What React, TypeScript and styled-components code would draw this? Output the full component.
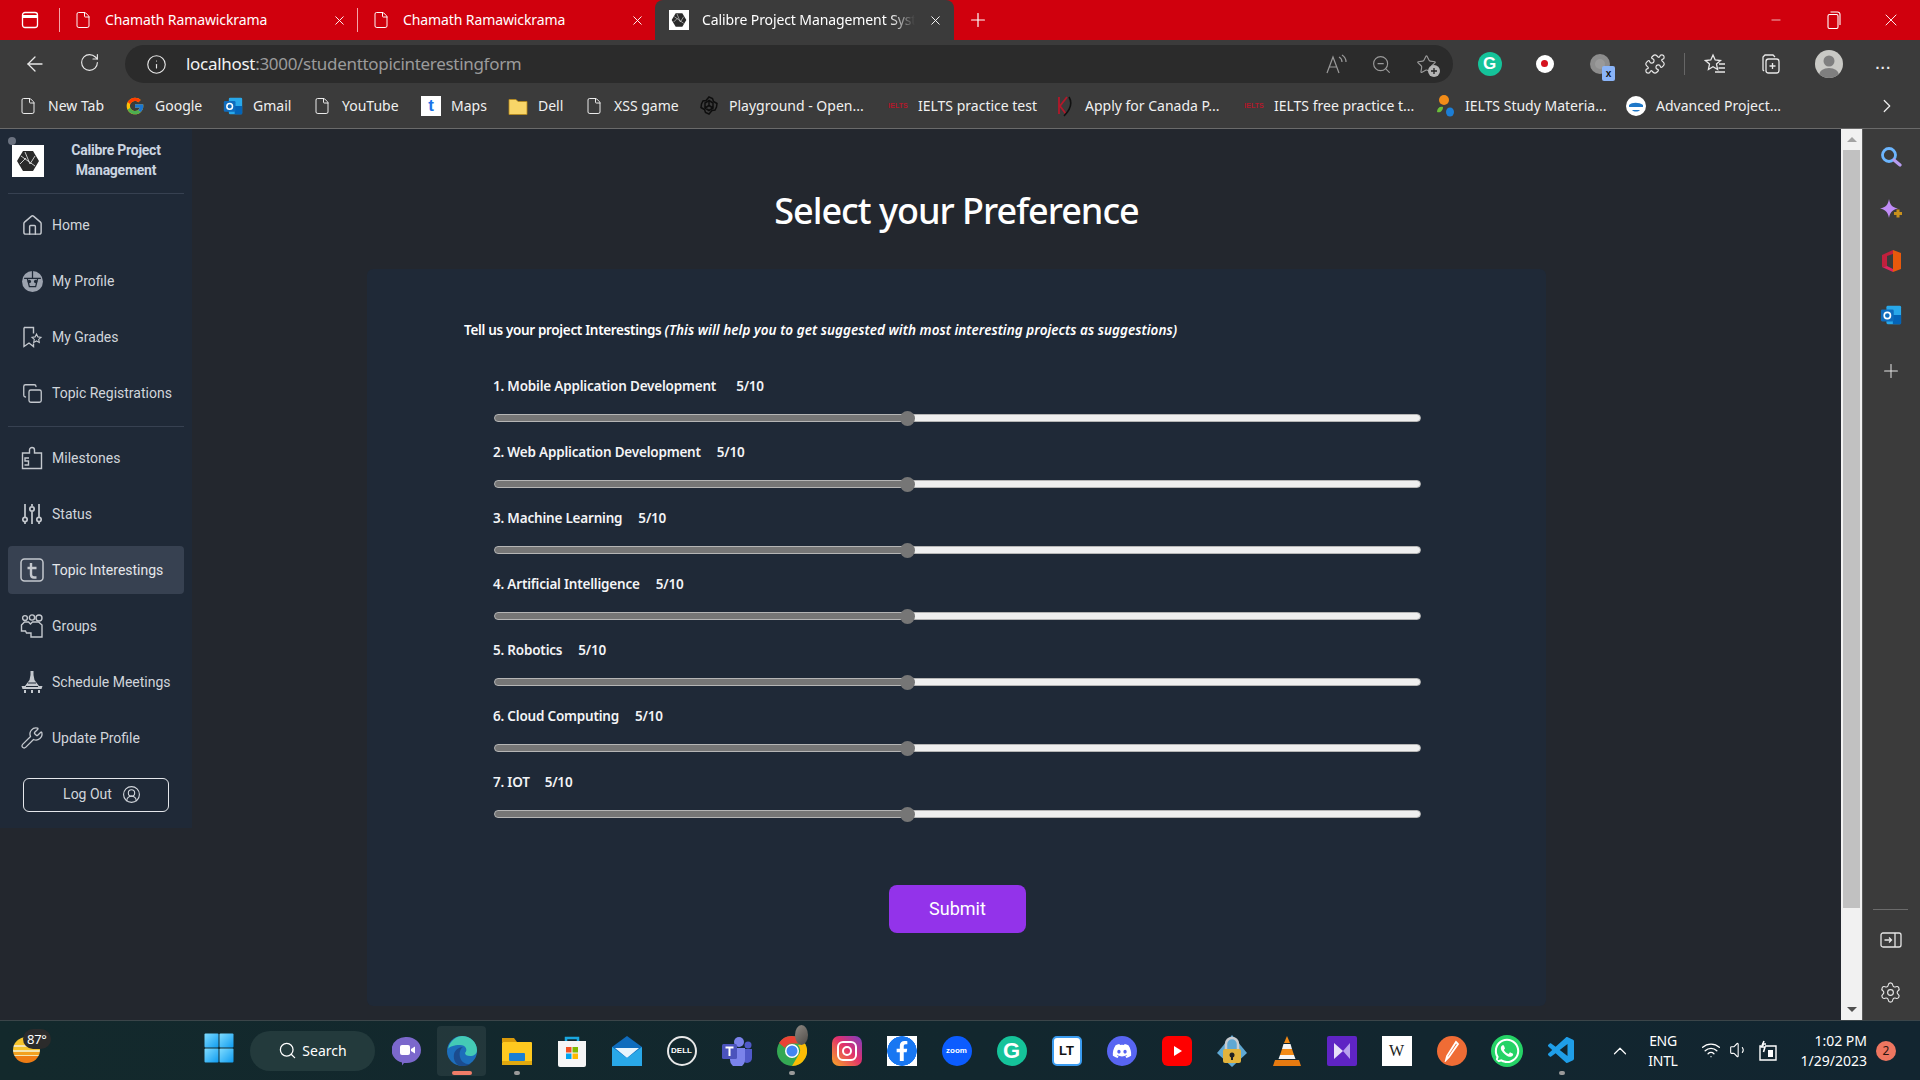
import React from 'react';
import styled, { createGlobalStyle } from 'styled-components';
import {
  ArrowLeft,
  ChevronRight,
  ChevronUp,
  CircleUserRound,
  Copy,
  File,
  House,
  Info,
  Minus,
  Plus,
  Puzzle,
  RotateCw,
  Search,
  Settings,
  Star,
  Volume1,
  Wifi,
  Wrench,
  X,
  ZoomOut,
} from 'lucide-react';
import { FcGoogle } from 'react-icons/fc';
import { FaDiscord, FaFacebookF, FaWhatsapp } from 'react-icons/fa';
import { VscVscode } from 'react-icons/vsc';

const RED = '#d0000d';
const CHROME = '#3b3b3b';
const PAGE = '#23272e';
const PANEL = '#1f2937';
const UI_FONT = '"Noto Sans", "Open Sans", sans-serif';

const GlobalStyle = createGlobalStyle`
  html, body { margin: 0; padding: 0; background: ${PAGE}; }
  * { box-sizing: border-box; }
  #root { width: 1920px; height: 1080px; overflow: hidden; }
`;

const Screen = styled.div`
  width: 1920px;
  height: 1080px;
  display: flex;
  flex-direction: column;
  font-family: ${UI_FONT};
  overflow: hidden;
`;

/* ---------- tab strip ---------- */
const TabStrip = styled.div`
  height: 40px;
  background: ${RED};
  display: flex;
  align-items: stretch;
  color: #fff;
`;
const TabsButton = styled.div`
  width: 59px;
  display: flex;
  align-items: center;
  justify-content: center;
  padding-left: 1px;
`;
const Tab = styled.div<{ $active?: boolean }>`
  width: ${(p) => (p.$active ? '299px' : '298px')};
  display: flex;
  align-items: center;
  gap: 13px;
  padding: ${(p) => (p.$active ? '0 11px 0 14px' : '0 10px 0 15px')};
  background: ${(p) => (p.$active ? CHROME : 'transparent')};
  border-radius: ${(p) => (p.$active ? '8px 8px 0 0' : '0')};
  position: relative;
  &::before {
    content: '';
    display: ${(p) => (p.$active ? 'none' : 'block')};
    position: absolute;
    left: 0;
    top: 8px;
    bottom: 8px;
    width: 1px;
    background: #f5a5a8;
  }
`;
const TabTitle = styled.span<{ $fade?: boolean }>`
  flex: 1;
  font-size: 14px;
  line-height: 20px;
  letter-spacing: -0.1px;
  white-space: nowrap;
  overflow: hidden;
  ${(p) => p.$fade && 'mask-image: linear-gradient(to right, #000 88%, transparent 100%);'}
`;
const NewTab = styled.div`
  width: 48px;
  display: flex;
  align-items: center;
  justify-content: center;
`;
const WindowControls = styled.div`
  margin-left: auto;
  display: flex;
  align-items: center;
`;
const WindowButton = styled.div`
  width: 57.5px;
  display: flex;
  justify-content: center;
`;

/* ---------- address bar ---------- */
const Toolbar = styled.div`
  height: 45px;
  background: ${CHROME};
  display: flex;
  align-items: center;
  color: #e8e8e8;
`;
const NavButton = styled.div`
  width: 55px;
  display: flex;
  justify-content: center;
`;
const NavGroup = styled.div`
  display: flex;
  width: 125px;
  padding-left: 7px;
  margin-top: 2px;
`;
const AddressBar = styled.div`
  width: 1328px;
  height: 38px;
  margin-top: 3px;
  background: #2b2b2b;
  border-radius: 19px;
  display: flex;
  align-items: center;
  padding: 0 16px 0 21px;
`;
const Url = styled.div`
  margin-left: 19px;
  margin-top: -2px;
  font-size: 17px;
  letter-spacing: -0.3px;
  color: #9b9b9b;
  flex: 1;
  b {
    font-weight: 400;
    color: #f2f2f2;
  }
`;
const AddressIcons = styled.div`
  display: flex;
  align-items: center;
  gap: 24px;
  color: #9a9a9a;
`;
const ExtensionRow = styled.div`
  display: flex;
  align-items: center;
  margin-left: 9px;
  margin-top: 2px;
`;
const ExtensionCell = styled.div`
  width: 55px;
  height: 36px;
  display: flex;
  align-items: center;
  justify-content: center;
  position: relative;
`;
const ToolbarDivider = styled.div`
  width: 1px;
  height: 22px;
  background: #666;
  margin: 0 2px;
`;
const GrammarlyBadge = styled.div<{ $size: number }>`
  width: ${(p) => p.$size}px;
  height: ${(p) => p.$size}px;
  border-radius: 50%;
  background: #15c39a;
  color: #fff;
  font: 700 ${(p) => Math.round(p.$size * 0.72)}px/1 'Liberation Sans', sans-serif;
  display: flex;
  align-items: center;
  justify-content: center;
`;
const RecordDot = styled.div`
  width: 18px;
  height: 18px;
  border-radius: 50%;
  background: #fff;
  display: flex;
  align-items: center;
  justify-content: center;
  &::after {
    content: '';
    width: 7px;
    height: 7px;
    border-radius: 50%;
    background: #d5121e;
  }
`;
const PowerBadge = styled.div`
  width: 20px;
  height: 20px;
  border-radius: 50%;
  background: #9a9a9a;
  border: 5px solid #8d8d8d;
`;
const XBadge = styled.span`
  position: absolute;
  left: 30px;
  top: 20px;
  width: 13px;
  height: 15px;
  background: #8ab4f8;
  border-radius: 2px;
  color: #111;
  font: 700 10px/15px 'Liberation Sans', sans-serif;
  text-align: center;
`;
const Avatar = styled.div`
  width: 28px;
  height: 28px;
  border-radius: 50%;
  background: #c9c9c5;
  overflow: hidden;
  margin-left: 8px;
`;
const MoreDots = styled.div`
  font: 700 14px/10px 'Liberation Sans', sans-serif;
  letter-spacing: 1.5px;
  color: #eee;
  margin-left: 8px;
`;

/* ---------- bookmarks ---------- */
const BookmarkBar = styled.div`
  height: 44px;
  background: ${CHROME};
  border-bottom: 1px solid #6a6a6a;
  display: flex;
  align-items: center;
  padding: 0 22px 2px 18px;
  color: #f0f0f0;
`;
const Bookmark = styled.div<{ $w: number }>`
  width: ${(p) => p.$w}px;
  display: flex;
  align-items: center;
  gap: 10px;
  font-size: 14px;
  letter-spacing: 0;
  white-space: nowrap;
`;
const FavIcon = styled.span`
  width: 20px;
  height: 20px;
  flex: none;
  display: flex;
  align-items: center;
  justify-content: center;
`;
const TabFavIcon = styled(FavIcon)`
  background: #fff;
`;
const IeltsMark = styled.span`
  color: #b3182a;
  font: 700 7px/1 'Liberation Sans', sans-serif;
`;
const MapsMark = styled.span`
  width: 20px;
  height: 20px;
  background: #fff;
  color: #1a73e8;
  font: 700 17px/20px 'Liberation Sans', sans-serif;
  text-align: center;
`;
const BookmarkMore = styled.div`
  margin-left: auto;
  display: flex;
`;

/* ---------- page ---------- */
const Body = styled.div`
  flex: 1;
  min-height: 0;
  display: flex;
`;
const Page = styled.div`
  flex: 1;
  min-width: 0;
  background: ${PAGE};
  display: flex;
  align-items: flex-start;
`;
const Sidebar = styled.aside`
  width: 192px;
  height: 699px;
  flex: none;
  background: ${PANEL};
  padding: 0 8px;
  display: flex;
  flex-direction: column;
  font-family: Roboto, sans-serif;
`;
const Brand = styled.div`
  height: 65px;
  border-bottom: 1px solid #374151;
  display: flex;
  align-items: center;
  padding: 6px 0 0 4px;
  position: relative;
  margin-bottom: 7px;
  &::before {
    content: '';
    position: absolute;
    left: 0;
    top: 8px;
    width: 8px;
    height: 8px;
    border-radius: 50%;
    background: #6b7280;
  }
`;
const BrandLogo = styled.div`
  width: 32px;
  height: 32px;
  background: #fff;
  display: flex;
  align-items: center;
  justify-content: center;
  margin-top: -6px;
`;
const BrandName = styled.div`
  flex: 1;
  margin-top: -8px;
  padding-left: 4px;
  text-align: center;
  font-size: 14px;
  line-height: 20px;
  font-weight: 700;
  letter-spacing: -0.25px;
  color: #cbd5e1;
`;
const NavList = styled.div`
  display: flex;
  flex-direction: column;
  gap: 8px;
`;
const NavDivider = styled.div`
  height: 1px;
  background: #374151;
  margin: 9px 0 7px;
`;
const NavItem = styled.div<{ $active?: boolean }>`
  height: 48px;
  display: flex;
  align-items: center;
  gap: 8px;
  padding-left: 12px;
  border-radius: 4px;
  font-size: 14px;
  color: ${(p) => (p.$active ? '#e5e7eb' : '#d1d5db')};
  background: ${(p) => (p.$active ? '#374151' : 'transparent')};
`;
const NavIcon = styled.span`
  width: 24px;
  height: 24px;
  flex: none;
  display: flex;
  align-items: center;
  justify-content: center;
  color: #c4c8ce;
`;
const LogoutButton = styled.div`
  margin: 16px 0 0 15px;
  width: 146px;
  height: 34px;
  border: 1px solid #e5e7eb;
  border-radius: 6px;
  display: flex;
  align-items: center;
  justify-content: center;
  gap: 10px;
  font-size: 14px;
  color: #d1d5db;
  padding: 0 0 2px 12px;
`;

const FormColumn = styled.main`
  width: 1179px;
  margin-left: 175px;
`;
const Title = styled.h1`
  margin: 0;
  padding-top: 60px;
  height: 140px;
  font-size: 36px;
  line-height: 44px;
  font-weight: 500;
  letter-spacing: -1px;
  text-align: center;
  color: #fff;
`;
const Card = styled.form`
  background: ${PANEL};
  border-radius: 6px;
  padding: 51px 97px 73px;
  height: 737px;
  display: flex;
  flex-direction: column;
`;
const Intro = styled.p`
  margin: 0 0 36px;
  font-size: 13.5px;
  line-height: 20px;
  font-weight: 600;
  letter-spacing: -0.33px;
  color: #fff;
  em {
    font-style: italic;
    letter-spacing: 0.04px;
  }
`;
const Rows = styled.div`
  padding-left: 30px;
  display: flex;
  flex-direction: column;
  gap: 16px;
`;
const Row = styled.div`
  display: flex;
  flex-direction: column;
  gap: 14px;
`;
const RowLabel = styled.label<{ $gap: number }>`
  display: flex;
  gap: ${(p) => p.$gap}px;
  margin-left: -1px;
  font-size: 13.5px;
  line-height: 20px;
  font-weight: 600;
  letter-spacing: -0.2px;
  color: #f3f4f6;
`;
const Range = styled.input`
  appearance: none;
  display: block;
  width: 927px;
  height: 16px;
  margin: 0;
  background: transparent;
  &::-webkit-slider-runnable-track {
    height: 8px;
    border-radius: 4px;
    border: 1px solid #b5b5b5;
    background: linear-gradient(to right, #767676 0 45%, #efefef 45% 100%);
  }
  &::-webkit-slider-thumb {
    appearance: none;
    width: 15px;
    height: 15px;
    margin-top: -4.5px;
    border-radius: 50%;
    background: #767676;
  }
`;
const Submit = styled.button`
  align-self: center;
  margin-top: 63px;
  margin-left: 2px;
  width: 137px;
  height: 48px;
  border: 0;
  border-radius: 8px;
  background: #9333ea;
  color: #fff;
  font: 400 18px/24px Roboto, sans-serif;
`;

/* ---------- scrollbar + edge panel ---------- */
const ScrollBar = styled.div`
  width: 21px;
  background: #f1f1f1;
  display: flex;
  flex-direction: column;
  align-items: center;
`;
const ScrollArrow = styled.div<{ $down?: boolean }>`
  flex: none;
  height: 21px;
  display: flex;
  align-items: center;
  &::after {
    content: '';
    border-left: 5px solid transparent;
    border-right: 5px solid transparent;
    ${(p) => (p.$down ? 'border-top: 5px solid #505050;' : 'border-bottom: 5px solid #a3a3a3;')}
  }
`;
const ScrollThumb = styled.div`
  width: 17px;
  height: 758px;
  background: #c1c1c1;
`;
const ScrollSpacer = styled.div`
  flex: 1;
`;
const EdgePanel = styled.div`
  width: 58px;
  background: ${CHROME};
  border-left: 1px solid #5a5a5a;
  padding: 2px 2px 2px 0;
  display: flex;
  flex-direction: column;
  align-items: center;
  color: #e6e6e6;
`;
const EdgeCell = styled.div<{ $push?: number }>`
  width: 100%;
  height: 52px;
  margin-top: ${(p) => p.$push ?? 0}px;
  display: flex;
  align-items: center;
  justify-content: center;
`;
const EdgeSpacer = styled.div`
  flex: 1;
`;
const EdgeDivider = styled.div`
  width: 35px;
  height: 1px;
  background: #6b6b6b;
  margin-bottom: 4px;
`;
const FavoriteAddWrap = styled.span`
  position: relative;
  display: flex;
`;
const FavoriteAddBadge = styled.svg`
  position: absolute;
  right: -3px;
  bottom: -2px;
`;

/* ---------- taskbar ---------- */
const Taskbar = styled.footer`
  height: 60px;
  border-top: 1px solid #3b4549;
  background: linear-gradient(to right, #13292c, #12272e 50%, #122530);
  display: flex;
  align-items: center;
  padding-right: 24px;
  color: #fff;
`;
const Weather = styled.div`
  width: 204px;
  height: 100%;
  position: relative;
`;
const Sun = styled.div`
  position: absolute;
  left: 13px;
  top: 16px;
  width: 27px;
  height: 26px;
  border-radius: 50%;
  background: linear-gradient(
    #f6c42c 0 30%,
    #f3e3b0 30% 37%,
    #f6c42c 37% 50%,
    #f3e3b0 50% 57%,
    #f2a020 57% 68%,
    #f3e3b0 68% 74%,
    #ee7c14 74%
  );
`;
const Temp = styled.span`
  position: absolute;
  left: 23px;
  top: 8px;
  height: 20px;
  padding: 0 4px;
  border-radius: 10px;
  background: #2b2b2b;
  font-size: 13px;
  line-height: 20px;
  letter-spacing: -0.3px;
`;
const StartButton = styled.div`
  width: 46px;
  flex: none;
`;
const SearchPill = styled.div`
  width: 125px;
  height: 40px;
  flex: none;
  border-radius: 20px;
  background: #233a3c;
  display: flex;
  align-items: center;
  justify-content: center;
  gap: 5px;
  font-size: 14px;
  margin-right: 4px;
`;
const TaskCell = styled.div<{ $active?: boolean }>`
  width: 55px;
  height: 50px;
  flex: none;
  display: flex;
  align-items: center;
  justify-content: center;
  position: relative;
  &::before {
    content: '';
    display: ${(p) => (p.$active ? 'block' : 'none')};
    position: absolute;
    inset: 0 3px;
    border-radius: 4px;
    background: rgba(255, 255, 255, 0.07);
  }
`;
const TaskDot = styled.span<{ $running?: boolean }>`
  position: absolute;
  left: 50%;
  bottom: 1px;
  height: 4px;
  width: ${(p) => (p.$running ? '20px' : '6px')};
  transform: translateX(-50%);
  border-radius: 2px;
  background: ${(p) => (p.$running ? '#f07d68' : '#9a9a9a')};
`;
const IconTile = styled.div<{ $bg: string; $radius?: string; $color?: string; $ring?: string }>`
  position: relative;
  width: 30px;
  height: 30px;
  display: flex;
  align-items: center;
  justify-content: center;
  background: ${(p) => p.$bg};
  border-radius: ${(p) => p.$radius ?? '50%'};
  color: ${(p) => p.$color ?? '#fff'};
  border: ${(p) => (p.$ring ? `2px solid ${p.$ring}` : '0')};
  font-family: 'Liberation Sans', sans-serif;
`;
const TileText = styled.span<{ $size: number; $serif?: boolean }>`
  font-size: ${(p) => p.$size}px;
  font-weight: 700;
  line-height: 1;
  ${(p) => p.$serif && "font-family: 'Liberation Serif', serif; font-weight: 400;"}
`;
const WhatsappIcon = styled(FaWhatsapp)`
  background: #25d366;
  border-radius: 50%;
  padding: 2px;
`;
const ChromeBadge = styled.span`
  position: absolute;
  left: 31px;
  top: -1px;
  width: 13px;
  height: 20px;
  border-radius: 50%;
  background: linear-gradient(135deg, #8f8a84, #4e4a46);
`;
const TrayChevron = styled.div`
  margin-left: 20px;
  display: flex;
`;
const Lang = styled.div`
  margin-left: 12px;
  width: 40px;
  text-align: center;
  font-size: 14px;
  line-height: 20px;
  letter-spacing: -0.3px;
`;
const TrayIcons = styled.div`
  margin-left: 18px;
  display: flex;
  gap: 8px;
`;
const Clock = styled.div`
  margin-left: auto;
  text-align: right;
  font-size: 14px;
  line-height: 20px;
`;
const CountBadge = styled.div`
  margin-left: 9px;
  width: 20px;
  height: 20px;
  border-radius: 50%;
  background: #ee7660;
  color: #2a1510;
  font-size: 12px;
  line-height: 20px;
  text-align: center;
`;

/* ---------- hand drawn icons ---------- */
function HexLogo({ size }: { size: number }) {
  return (
    <svg width={size} height={size} viewBox="0 0 24 24">
      <path d="M7 2h10l6 10-6 10H7L1 12z" fill="#2a2a2a" />
      <path d="M5 7l14 10M9 3l5 12 5-8M4 15l6-6" stroke="#ddd" strokeWidth="0.9" fill="none" />
    </svg>
  );
}
function TabsIcon() {
  return (
    <svg width="18" height="18" viewBox="0 0 18 18" fill="none" stroke="#fff" strokeWidth="1.3">
      <rect x="1.5" y="1.5" width="15" height="15" rx="2.5" />
      <path d="M2 5.5h14" strokeWidth="3" />
    </svg>
  );
}
function ProfileIcon() {
  return (
    <svg width="23" height="23" viewBox="0 0 22 22">
      <circle cx="11" cy="11" r="10" fill="#9ca3af" />
      <path d="M3 8h16M11 1v7M6 8l2 8h6l2-8" stroke="#1f2937" strokeWidth="1.2" fill="none" />
      <circle cx="8" cy="11" r="1.6" fill="#1f2937" />
      <circle cx="14" cy="11" r="1.6" fill="#1f2937" />
    </svg>
  );
}
function GradesIcon() {
  return (
    <svg width="22" height="22" viewBox="0 0 22 22" fill="none" stroke="currentColor" strokeWidth="1.4">
      <path d="M3 1.5h9.5v6M3 1.5v19l5-3.5 4.5 3.5v-3" />
      <path d="M15.5 8l1.4 2.9 3.1.4-2.3 2.1.6 3.1-2.8-1.6-2.8 1.6.6-3.1-2.3-2.1 3.1-.4z" strokeWidth="1.1" />
    </svg>
  );
}
function MilestonesIcon() {
  return (
    <svg width="22" height="24" viewBox="0 0 22 24" fill="none" stroke="currentColor" strokeWidth="1.4">
      <path d="M1.5 7h7V4a2.5 2.5 0 0 1 5 0v3h7v15.5h-19z" />
      <path d="M8 12H4v3h3.5v4H3.5" />
    </svg>
  );
}
function StatusIcon() {
  return (
    <svg width="20" height="22" viewBox="0 0 20 22" fill="none" stroke="currentColor" strokeWidth="1.7">
      <path d="M3 1v13M3 19v2M10 1v2M10 9v12M17 1v13M17 19v2" />
      <circle cx="3" cy="16.5" r="2.2" />
      <circle cx="10" cy="6" r="2.2" />
      <circle cx="17" cy="16.5" r="2.2" />
    </svg>
  );
}
function TopicIcon() {
  return (
    <svg width="24" height="24" viewBox="0 0 24 24" fill="none" stroke="currentColor" strokeWidth="1.5">
      <rect x="1" y="1" width="22" height="22" rx="3.5" />
      <path d="M11 5v11.5c0 2 1.2 3 3 3h2.5M7.5 10h9" strokeWidth="2.4" />
    </svg>
  );
}
function GroupsIcon() {
  return (
    <svg width="24" height="24" viewBox="0 0 24 24" fill="none" stroke="currentColor" strokeWidth="1.4">
      <circle cx="5" cy="4" r="2.4" />
      <circle cx="12" cy="3.5" r="2.6" />
      <circle cx="19" cy="4" r="3" />
      <path d="M1.5 17V11l3-3h4l2 2 2-2h6l3.5 3v12H11v-4H6.5l-1-2z" />
    </svg>
  );
}
function ScheduleIcon() {
  return (
    <svg width="24" height="24" viewBox="0 0 24 24" fill="currentColor">
      <path d="M10.5 1h3v4l1 5 4.5 6h3.5l-1 3H2.5l-1-3H5l4.5-6 1-5z" />
      <path d="M4 20h2v3H4zM11 20h2v3h-2zM18 20h2v3h-2z" />
      <path d="M8 13h8M6 16.5h12" stroke="#1f2937" strokeWidth="1" />
    </svg>
  );
}
function OutlookIcon({ size }: { size: number }) {
  return (
    <svg width={size} height={size} viewBox="0 0 24 24">
      <rect x="7" y="2" width="16" height="20" rx="1.5" fill="#28a8ea" />
      <rect x="14" y="12" width="9" height="10" fill="#0364b8" />
      <rect x="1" y="6" width="14" height="13" rx="1.5" fill="#0f6cbd" />
      <circle cx="8" cy="12.5" r="3.4" fill="none" stroke="#fff" strokeWidth="1.8" />
    </svg>
  );
}
function OpenAiIcon() {
  return (
    <svg width="23" height="23" viewBox="0 0 20 20" fill="none" stroke="#0e0e0e" strokeWidth="1.5">
      <path d="M10 1.5l3.5 1.5 1 3 3.5 2-.5 3.5-1.5 3-3 .5L10 18.500 6.500 17l-1-3-3.500-2 .5-3.500L4 5.500l3-.5z" />
      <path d="M10 5l4 2.500v5L10 15l-4-2.500v-5zM10 5v5l4 2.500M10 10l-4 2.500" />
    </svg>
  );
}
function KayIcon() {
  return (
    <svg width="20" height="22" viewBox="0 0 20 22" fill="none">
      <path d="M4 2v17M12 2L5 11l6 8" stroke="#b3182a" strokeWidth="1.8" />
      <path d="M14 2c3 5 2 12-5 19" stroke="#111" strokeWidth="1.6" />
    </svg>
  );
}
function StudyIcon() {
  return (
    <svg width="20" height="22" viewBox="0 0 20 22">
      <ellipse cx="9" cy="5" rx="5" ry="5" fill="#f28c18" />
      <path d="M2 17c0-4 3-6 6-5 0 4-3 6-6 5z" fill="#6bbf3a" />
      <ellipse cx="15" cy="17" rx="4" ry="4.5" fill="#1c7ed6" />
    </svg>
  );
}
function AdvancedIcon() {
  return (
    <svg width="20" height="20" viewBox="0 0 20 20">
      <circle cx="10" cy="10" r="10" fill="#fff" />
      <path d="M3 9c3-3 10-3 14 0v2H3z" fill="#1f78c8" />
      <path d="M6 14c2 2 6 2 8 0z" fill="#1f78c8" />
    </svg>
  );
}
function FolderFav() {
  return (
    <svg width="20" height="18" viewBox="0 0 20 18">
      <path d="M1 2.5h7l2 2h9v13H1z" fill="#f8d568" stroke="#b98a1a" strokeWidth="0.8" />
    </svg>
  );
}
function ReadAloudIcon() {
  return (
    <svg width="22" height="22" viewBox="0 0 22 22" fill="none" stroke="currentColor" strokeWidth="1.2">
      <path d="M2 20L8 4l6 16M4.5 14h7M14 4c2 1 3 3 3 5M17 2c2.5 1.5 4 4 4 7" />
    </svg>
  );
}
function FavoriteAddIcon() {
  return (
    <FavoriteAddWrap>
      <Star size={21} strokeWidth={1.3} />
      <FavoriteAddBadge width="12" height="12" viewBox="0 0 12 12">
        <circle cx="6" cy="6" r="6" fill="#b5b5b5" />
        <path d="M6 3v6M3 6h6" stroke="#222" strokeWidth="1.3" />
      </FavoriteAddBadge>
    </FavoriteAddWrap>
  );
}
function FavoritesIcon() {
  return (
    <svg width="22" height="22" viewBox="0 0 22 22" fill="none" stroke="currentColor" strokeWidth="1.3">
      <path d="M9 2l2.2 5 5.3.6-4 3.5 1.1 5.4L9 13.8 4.4 16.5l1.1-5.4-4-3.5L6.8 7zM15 11h6M14.5 15h6.500M11 19h10" />
    </svg>
  );
}
function CollectionsIcon() {
  return (
    <svg width="22" height="22" viewBox="0 0 22 22" fill="none" stroke="currentColor" strokeWidth="1.3">
      <path d="M5 18l-1-1V4l2-2h8l2 2" />
      <rect x="7" y="6" width="13" height="14" rx="2.5" />
      <path d="M13.5 10v6M10.5 13h6" />
    </svg>
  );
}
function AvatarShape() {
  return (
    <svg width="28" height="28" viewBox="0 0 28 28">
      <circle cx="14" cy="11" r="5.5" fill="#7f7f7f" />
      <ellipse cx="14" cy="25" rx="10" ry="7" fill="#7f7f7f" />
    </svg>
  );
}
function RestoreIcon() {
  return (
    <svg width="14" height="18" viewBox="0 0 14 18" fill="none" stroke="#fff" strokeWidth="1.1">
      <rect x="1" y="3.5" width="10" height="14" rx="1.5" />
      <path d="M3.5 1h7a2.5 2.5 0 0 1 2.5 2.5V14" />
    </svg>
  );
}
function EdgeSearchIcon() {
  return (
    <svg width="22" height="22" viewBox="0 0 22 22" fill="none">
      <circle cx="9" cy="9" r="6.5" stroke="#6cb6ff" strokeWidth="2.8" />
      <path d="M14 14l6 5" stroke="#b79cf0" strokeWidth="3.2" strokeLinecap="round" />
    </svg>
  );
}
function SparkIcon() {
  return (
    <svg width="24" height="22" viewBox="0 0 24 22">
      <path d="M10 1c1 6 3 8 9 9.5-6 1.5-8 4-9 9.5-1-5.5-3-8-9-9.5C7 9 9 7 10 1z" fill="#c08cf6" />
      <path d="M17.5 11.5h3v2.5H23v3h-2.5v2.5h-3V17H15v-3h2.5z" fill="#c8901c" />
    </svg>
  );
}
function OfficeIcon() {
  return (
    <svg width="22" height="24" viewBox="0 0 22 24">
      <path d="M13 1l8 3v16l-8 3z" fill="#e8590c" />
      <path d="M13 1L2 6v12l5 -1V7l6-2z" fill="#c2203d" />
      <path d="M2 18l11 5v-3l-6-3z" fill="#e0245e" />
    </svg>
  );
}
function SidebarToggleIcon() {
  return (
    <svg width="22" height="18" viewBox="0 0 22 18" fill="none" stroke="currentColor" strokeWidth="1.3">
      <rect x="1" y="2" width="20" height="14" rx="2" />
      <path d="M15 2v14M4.5 9h7M9 6.5L11.5 9 9 11.5" />
    </svg>
  );
}
function StartIcon() {
  return (
    <svg width="30" height="30" viewBox="0 0 30 30">
      <defs>
        <linearGradient id="win" x1="0" y1="0" x2="1" y2="1">
          <stop offset="0" stopColor="#7fdcff" />
          <stop offset="1" stopColor="#0f9cf0" />
        </linearGradient>
      </defs>
      <rect x="0.5" y="0.5" width="14" height="14" rx="1" fill="url(#win)" />
      <rect x="15.5" y="0.5" width="14" height="14" rx="1" fill="url(#win)" />
      <rect x="0.5" y="15.5" width="14" height="14" rx="1" fill="url(#win)" />
      <rect x="15.5" y="15.5" width="14" height="14" rx="1" fill="url(#win)" />
    </svg>
  );
}
function MeetIcon() {
  return (
    <svg width="30" height="30" viewBox="0 0 30 30">
      <path d="M15 1a14 13 0 0 1 0 26h-3l-2 2.5V26.5A14 13 0 0 1 15 1z" fill="#7b68cc" />
      <rect x="8" y="9" width="10" height="10" rx="2" fill="#fff" />
      <path d="M19 13l4-2.5v7L19 15z" fill="#fff" />
    </svg>
  );
}
function EdgeIcon() {
  return (
    <svg width="32" height="32" viewBox="0 0 32 32">
      <circle cx="16" cy="16" r="15" fill="#0c63b6" />
      <path d="M2 14C4 5 11 1 16 1c8 0 15 6 15 14 0 4-3 6-7 6-3 0-5-1-5-3 3-3 1-8-5-8-6 0-11 2-12 4z" fill="#36c6b0" />
      <path d="M16 31c-6 0-9-6-8-12 1-4 5-7 9-7-3 2-4 6-3 10 1 5 6 8 11 7-2 1-5 2-9 2z" fill="#0a3f86" />
    </svg>
  );
}
function ExplorerIcon() {
  return (
    <svg width="30" height="28" viewBox="0 0 30 28">
      <path d="M0 1h12l3 4H0z" fill="#d99a0a" />
      <rect x="0" y="5" width="30" height="23" rx="1" fill="#ffc91f" />
      <rect x="7" y="16" width="16" height="8" rx="1" fill="#1a7fd4" />
      <rect x="0" y="24" width="30" height="4" fill="#e0a80e" />
    </svg>
  );
}
function StoreIcon() {
  return (
    <svg width="30" height="32" viewBox="0 0 30 32">
      <path d="M9 6V3h12v3" stroke="#19a7e0" strokeWidth="2.5" fill="none" />
      <path d="M1 6h28v24a2 2 0 0 1-2 2H3a2 2 0 0 1-2-2z" fill="#f5f5f5" />
      <rect x="9" y="12" width="5.5" height="5.5" fill="#f25022" />
      <rect x="15.5" y="12" width="5.5" height="5.5" fill="#7fba00" />
      <rect x="9" y="18.5" width="5.5" height="5.5" fill="#00a4ef" />
      <rect x="15.5" y="18.5" width="5.5" height="5.5" fill="#ffb900" />
    </svg>
  );
}
function MailIcon() {
  return (
    <svg width="30" height="30" viewBox="0 0 30 30">
      <path d="M0 11L15 0l15 11v19H0z" fill="#0f6cbd" />
      <path d="M3 12h24L15 22z" fill="#e8f4fc" />
      <path d="M0 11l15 11 15-11v19H0z" fill="#29a8e8" />
    </svg>
  );
}
function TeamsIcon() {
  return (
    <svg width="30" height="30" viewBox="0 0 30 30">
      <circle cx="17" cy="6" r="5" fill="#7b83eb" />
      <circle cx="26" cy="9" r="3.5" fill="#5059c9" />
      <path d="M20 13h10v9a5 5 0 0 1-10 0z" fill="#5059c9" />
      <path d="M8 12h15v12a6 6 0 0 1-15 0z" fill="#7b83eb" />
      <rect x="0" y="8" width="15" height="15" rx="1.5" fill="#4b53bc" />
      <path d="M3.5 11.5h8M7.5 11.5V20" stroke="#fff" strokeWidth="2" />
    </svg>
  );
}
function ChromeIcon() {
  return (
    <svg width="30" height="30" viewBox="0 0 30 30">
      <circle cx="15" cy="15" r="15" fill="#34a853" />
      <path d="M15 0a15 15 0 0 1 13 7.5H15A7.5 7.5 0 0 0 8 12L2 7A15 15 0 0 1 15 0z" fill="#ea4335" />
      <path d="M28 7.5A15 15 0 0 1 15 30l6.5-11A7.5 7.5 0 0 0 21 9z" fill="#fbbc05" />
      <circle cx="15" cy="15" r="7" fill="#fff" />
      <circle cx="15" cy="15" r="5.5" fill="#4285f4" />
    </svg>
  );
}
function LockIcon() {
  return (
    <svg width="30" height="32" viewBox="0 0 30 32">
      <path d="M15 0l15 18-15 14L0 18z" fill="#5fa8d3" />
      <path d="M9 14V9a6 6 0 0 1 12 0v5" fill="none" stroke="#c8ccd0" strokeWidth="2.5" />
      <rect x="6" y="14" width="18" height="14" rx="2" fill="#e2b33c" />
      <circle cx="15" cy="20" r="2.5" fill="#222" />
      <path d="M14 20h2v5h-2z" fill="#222" />
    </svg>
  );
}
function VlcIcon() {
  return (
    <svg width="28" height="30" viewBox="0 0 28 30">
      <path d="M14 0l3 7H11z" fill="#f28a16" />
      <path d="M10.5 8h7l1.5 5H9z" fill="#f5f5f5" />
      <path d="M9 13h10l2 6H7z" fill="#f28a16" />
      <path d="M7 19h14l1.5 4h-17z" fill="#f5f5f5" />
      <path d="M2 24h24l2 6H0z" fill="#e67a10" />
    </svg>
  );
}
function VsPurpleIcon() {
  return (
    <svg width="18" height="20" viewBox="0 0 18 20">
      <path d="M1 2l9 8-9 8z" fill="#e8e0f8" />
      <path d="M17 2l-7 8 7 8z" fill="#b9a2ee" />
    </svg>
  );
}
function PostmanMark() {
  return (
    <svg width="18" height="22" viewBox="0 0 18 22" fill="none">
      <path d="M13 2l2 2L6 17l-3 3 1-4z" stroke="#fff" strokeWidth="1.8" />
    </svg>
  );
}
function BatteryIcon() {
  return (
    <svg width="22" height="22" viewBox="0 0 22 22" fill="none" stroke="#fff" strokeWidth="1.4">
      <path d="M8 6h11v14H3V6h1M9 4H6v2" />
      <path d="M7 1L4.5 7H8l-1.5 5" strokeWidth="1.6" />
      <rect x="11" y="10" width="5" height="7" fill="#fff" stroke="none" />
    </svg>
  );
}

const bookmarks: { label: string; w: number; icon: React.ReactNode }[] = [
  { label: 'New Tab', w: 107, icon: <File size={18} strokeWidth={1.3} /> },
  { label: 'Google', w: 98, icon: <FcGoogle size={20} /> },
  { label: 'Gmail', w: 89, icon: <OutlookIcon size={20} /> },
  { label: 'YouTube', w: 109, icon: <File size={18} strokeWidth={1.3} /> },
  { label: 'Maps', w: 87, icon: <MapsMark>t</MapsMark> },
  { label: 'Dell', w: 76, icon: <FolderFav /> },
  { label: 'XSS game', w: 115, icon: <File size={18} strokeWidth={1.3} /> },
  { label: 'Playground - Open...', w: 189, icon: <OpenAiIcon /> },
  { label: 'IELTS practice test', w: 167, icon: <IeltsMark>IELTS</IeltsMark> },
  { label: 'Apply for Canada P...', w: 189, icon: <KayIcon /> },
  { label: 'IELTS free practice t...', w: 191, icon: <IeltsMark>IELTS</IeltsMark> },
  { label: 'IELTS Study Materia...', w: 191, icon: <StudyIcon /> },
  { label: 'Advanced Project...', w: 180, icon: <AdvancedIcon /> },
];

const mainNav = [
  { label: 'Home', icon: <House size={23} strokeWidth={1.5} /> },
  { label: 'My Profile', icon: <ProfileIcon /> },
  { label: 'My Grades', icon: <GradesIcon /> },
  { label: 'Topic Registrations', icon: <Copy size={21} strokeWidth={1.5} /> },
];

const moreNav = [
  { label: 'Milestones', icon: <MilestonesIcon /> },
  { label: 'Status', icon: <StatusIcon /> },
  { label: 'Topic Interestings', icon: <TopicIcon />, active: true },
  { label: 'Groups', icon: <GroupsIcon /> },
  { label: 'Schedule Meetings', icon: <ScheduleIcon /> },
  { label: 'Update Profile', icon: <Wrench size={24} strokeWidth={1.3} /> },
];

const topics = [
  { label: '1. Mobile Application Development', gap: 20 },
  { label: '2. Web Application Development', gap: 16 },
  { label: '3. Machine Learning', gap: 16 },
  { label: '4. Artificial Intelligence', gap: 16 },
  { label: '5. Robotics', gap: 16 },
  { label: '6. Cloud Computing', gap: 16 },
  { label: '7. IOT', gap: 15 },
];

const taskApps: { key: string; icon: React.ReactNode; active?: boolean; dot?: boolean }[] = [
  { key: 'meet', icon: <MeetIcon /> },
  { key: 'edge', icon: <EdgeIcon />, active: true },
  { key: 'explorer', icon: <ExplorerIcon />, dot: true },
  { key: 'store', icon: <StoreIcon /> },
  { key: 'mail', icon: <MailIcon /> },
  {
    key: 'dell',
    icon: (
      <IconTile $bg="transparent" $ring="#e8e8e8">
        <TileText $size={8}>DELL</TileText>
      </IconTile>
    ),
  },
  { key: 'teams', icon: <TeamsIcon /> },
  {
    key: 'chrome',
    icon: (
      <>
        <ChromeIcon />
        <ChromeBadge />
      </>
    ),
    dot: true,
  },
  {
    key: 'instagram',
    icon: (
      <IconTile $bg="linear-gradient(45deg,#f9a825,#e1306c 55%,#7b3fc4)" $radius="7px">
        <svg width="22" height="22" viewBox="0 0 22 22" fill="none" stroke="#fff" strokeWidth="2">
          <rect x="2" y="2" width="18" height="18" rx="5" />
          <circle cx="11" cy="11" r="4" />
        </svg>
      </IconTile>
    ),
  },
  {
    key: 'facebook',
    icon: (
      <IconTile $bg="radial-gradient(circle, #1877f2 0 14.5px, #fff 15px)" $radius="0">
        <FaFacebookF size={20} />
      </IconTile>
    ),
  },
  {
    key: 'zoom',
    icon: (
      <IconTile $bg="#0b5cff">
        <TileText $size={8}>zoom</TileText>
      </IconTile>
    ),
  },
  {
    key: 'grammarly',
    icon: (
      <IconTile $bg="#15c39a">
        <TileText $size={22}>G</TileText>
      </IconTile>
    ),
  },
  {
    key: 'lt',
    icon: (
      <IconTile $bg="#fff" $radius="5px" $color="#111" $ring="#3b9cf0">
        <TileText $size={13}>LT</TileText>
      </IconTile>
    ),
  },
  {
    key: 'discord',
    icon: (
      <IconTile $bg="#5865f2">
        <FaDiscord size={20} />
      </IconTile>
    ),
  },
  {
    key: 'youtube',
    icon: (
      <IconTile $bg="#f00" $radius="6px">
        <svg width="12" height="12" viewBox="0 0 12 12">
          <path d="M3 1l8 5-8 5z" fill="#fff" />
        </svg>
      </IconTile>
    ),
  },
  { key: 'lock', icon: <LockIcon /> },
  { key: 'vlc', icon: <VlcIcon /> },
  {
    key: 'vs',
    icon: (
      <IconTile $bg="#5f24c4" $radius="2px">
        <VsPurpleIcon />
      </IconTile>
    ),
  },
  {
    key: 'wiki',
    icon: (
      <IconTile $bg="#fff" $radius="0" $color="#222">
        <TileText $size={16} $serif>
          W
        </TileText>
      </IconTile>
    ),
  },
  {
    key: 'postman',
    icon: (
      <IconTile $bg="#ef6c35">
        <PostmanMark />
      </IconTile>
    ),
  },
  { key: 'whatsapp', icon: <WhatsappIcon size={32} color="#fff" /> },
  { key: 'vscode', icon: <VscVscode size={32} color="#1f9ee8" />, dot: true },
];

export default function App() {
  return (
    <>
      <GlobalStyle />
      <Screen>
        <TabStrip>
          <TabsButton>
            <TabsIcon />
          </TabsButton>
          {[0, 1].map((n) => (
            <Tab key={n}>
              <File size={18} strokeWidth={1.3} />
              <TabTitle>Chamath Ramawickrama</TabTitle>
              <X size={15} strokeWidth={1.5} />
            </Tab>
          ))}
          <Tab $active>
            <TabFavIcon>
              <HexLogo size={16} />
            </TabFavIcon>
            <TabTitle $fade>Calibre Project Management System</TabTitle>
            <X size={15} strokeWidth={1.5} />
          </Tab>
          <NewTab>
            <Plus size={22} strokeWidth={1.3} />
          </NewTab>
          <WindowControls>
            <WindowButton>
              <Minus size={14} strokeWidth={1.2} />
            </WindowButton>
            <WindowButton>
              <RestoreIcon />
            </WindowButton>
            <WindowButton>
              <X size={20} strokeWidth={1.1} />
            </WindowButton>
          </WindowControls>
        </TabStrip>

        <Toolbar>
          <NavGroup>
            <NavButton>
              <ArrowLeft size={24} strokeWidth={1.3} />
            </NavButton>
            <NavButton>
              <RotateCw size={21} strokeWidth={1.3} />
            </NavButton>
          </NavGroup>
          <AddressBar>
            <Info size={21} strokeWidth={1.3} color="#e8e8e8" />
            <Url>
              <b>localhost</b>:3000/studenttopicinterestingform
            </Url>
            <AddressIcons>
              <ReadAloudIcon />
              <ZoomOut size={21} strokeWidth={1.3} />
              <FavoriteAddIcon />
            </AddressIcons>
          </AddressBar>
          <ExtensionRow>
            <ExtensionCell>
              <GrammarlyBadge $size={24}>G</GrammarlyBadge>
            </ExtensionCell>
            <ExtensionCell>
              <RecordDot />
            </ExtensionCell>
            <ExtensionCell>
              <PowerBadge />
              <XBadge>x</XBadge>
            </ExtensionCell>
            <ExtensionCell>
              <Puzzle size={22} strokeWidth={1.3} />
            </ExtensionCell>
            <ToolbarDivider />
            <ExtensionCell>
              <FavoritesIcon />
            </ExtensionCell>
            <ExtensionCell>
              <CollectionsIcon />
            </ExtensionCell>
            <ExtensionCell>
              <Avatar>
                <AvatarShape />
              </Avatar>
            </ExtensionCell>
            <ExtensionCell>
              <MoreDots>...</MoreDots>
            </ExtensionCell>
          </ExtensionRow>
        </Toolbar>

        <BookmarkBar>
          {bookmarks.map((b) => (
            <Bookmark key={b.label + b.w} $w={b.w}>
              <FavIcon>{b.icon}</FavIcon>
              {b.label}
            </Bookmark>
          ))}
          <BookmarkMore>
            <ChevronRight size={22} strokeWidth={1.3} />
          </BookmarkMore>
        </BookmarkBar>

        <Body>
          <Page>
            <Sidebar>
              <Brand>
                <BrandLogo>
                  <HexLogo size={24} />
                </BrandLogo>
                <BrandName>
                  Calibre Project
                  <br />
                  Management
                </BrandName>
              </Brand>
              <NavList>
                {mainNav.map((item) => (
                  <NavItem key={item.label}>
                    <NavIcon>{item.icon}</NavIcon>
                    {item.label}
                  </NavItem>
                ))}
              </NavList>
              <NavDivider />
              <NavList>
                {moreNav.map((item) => (
                  <NavItem key={item.label} $active={item.active}>
                    <NavIcon>{item.icon}</NavIcon>
                    {item.label}
                  </NavItem>
                ))}
              </NavList>
              <LogoutButton>
                Log Out
                <CircleUserRound size={19} strokeWidth={1.4} />
              </LogoutButton>
            </Sidebar>
            <FormColumn>
              <Title>Select your Preference</Title>
              <Card onSubmit={(e) => e.preventDefault()}>
                <Intro>
                  Tell us your project Interestings{' '}
                  <em>(This will help you to get suggested with most interesting projects as suggestions)</em>
                </Intro>
                <Rows>
                  {topics.map((t) => (
                    <Row key={t.label}>
                      <RowLabel $gap={t.gap}>
                        <span>{t.label}</span>
                        <span>5/10</span>
                      </RowLabel>
                      <Range type="range" min={0} max={100} step={0.1} defaultValue={44.5} />
                    </Row>
                  ))}
                </Rows>
                <Submit type="submit">Submit</Submit>
              </Card>
            </FormColumn>
          </Page>
          <ScrollBar>
            <ScrollArrow />
            <ScrollThumb />
            <ScrollSpacer />
            <ScrollArrow $down />
          </ScrollBar>
          <EdgePanel>
            <EdgeCell>
              <EdgeSearchIcon />
            </EdgeCell>
            <EdgeCell>
              <SparkIcon />
            </EdgeCell>
            <EdgeCell>
              <OfficeIcon />
            </EdgeCell>
            <EdgeCell $push={2}>
              <OutlookIcon size={22} />
            </EdgeCell>
            <EdgeCell $push={4}>
              <Plus size={22} strokeWidth={1.1} />
            </EdgeCell>
            <EdgeSpacer />
            <EdgeDivider />
            <EdgeCell>
              <SidebarToggleIcon />
            </EdgeCell>
            <EdgeCell>
              <Settings size={23} strokeWidth={1.2} />
            </EdgeCell>
          </EdgePanel>
        </Body>

        <Taskbar>
          <Weather>
            <Sun />
            <Temp>87°</Temp>
          </Weather>
          <StartButton>
            <StartIcon />
          </StartButton>
          <SearchPill>
            <Search size={19} strokeWidth={1.6} />
            Search
          </SearchPill>
          {taskApps.map((app) => (
            <TaskCell key={app.key} $active={app.active}>
              {app.icon}
              {app.active && <TaskDot $running />}
              {app.dot && <TaskDot />}
            </TaskCell>
          ))}
          <TrayChevron>
            <ChevronUp size={22} strokeWidth={1.3} />
          </TrayChevron>
          <Lang>
            ENG
            <br />
            INTL
          </Lang>
          <TrayIcons>
            <Wifi size={20} strokeWidth={1.6} />
            <Volume1 size={20} strokeWidth={1.3} />
            <BatteryIcon />
          </TrayIcons>
          <Clock>
            1:02 PM
            <br />
            1/29/2023
          </Clock>
          <CountBadge>2</CountBadge>
        </Taskbar>
      </Screen>
    </>
  );
}
